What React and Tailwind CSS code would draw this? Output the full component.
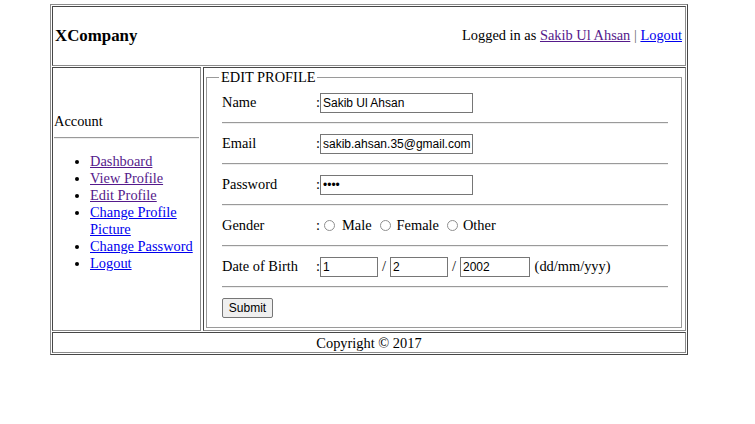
const cell =
  "border border-t-[#474747] border-l-[#474747] border-b-[#8c8c8c] border-r-[#8c8c8c]";

const inputCls =
  "h-[20px] border border-[#767676] bg-white pl-[2px] pr-[1px] font-['Liberation_Sans',Arial,sans-serif] text-[12px] text-black outline-none";

function Radio({ className = "" }) {
  return (
    <span
      className={
        "inline-block h-[11px] w-[11px] shrink-0 rounded-full border border-[#8f8f8f] bg-white " +
        className
      }
    />
  );
}

function Hr() {
  return (
    <div className="flex h-[20px] items-center">
      <div className="h-[2px] w-full border-t border-b border-t-[#9a9a9a] border-b-[#eeeeee]" />
    </div>
  );
}

function Row({ label, children }) {
  return (
    <div className="flex h-[21px] items-center">
      <div className="w-[94px] shrink-0">{label}</div>
      <span>:</span>
      {children}
    </div>
  );
}

export default function App() {
  return (
    <div className="min-h-[424px] w-[755px] bg-white pt-[4px] font-['Liberation_Serif','Times_New_Roman',serif] text-[14.4px] leading-[17px] text-black">
      <div className="ml-[50px] grid w-[638px] grid-cols-[149px_483px] gap-x-[2px] gap-y-[1px] border border-t-[#8c8c8c] border-l-[#8c8c8c] border-b-[#474747] border-r-[#474747] p-[1px]">
        {/* Header */}
        <div
          className={`${cell} col-span-2 flex h-[60px] items-center justify-between pl-[2px] pr-[3px]`}
        >
          <div className="text-[16.85px] font-bold leading-[20px]">XCompany</div>
          <div className="pb-[1px]">
            Logged in as{" "}
            <a href="#" className="text-[#551a8b] underline">
              Sakib Ul Ahsan
            </a>{" "}
            <span className="text-[#6a6a6a]">|</span>{" "}
            <a href="#" className="text-[#0000ee] underline">
              Logout
            </a>
          </div>
        </div>

        {/* Sidebar */}
        <div className={`${cell} h-[264px] px-[1px] pt-[45px]`}>
          <div>Account</div>
          <div className="mt-[7px] h-[2px] w-full border-t border-b border-t-[#9a9a9a] border-b-[#eeeeee]" />
          <ul className="mt-[14px] list-disc pl-[36px]">
            <li>
              <a href="#" className="text-[#551a8b] underline">Dashboard</a>
            </li>
            <li>
              <a href="#" className="text-[#551a8b] underline">View Profile</a>
            </li>
            <li>
              <a href="#" className="text-[#551a8b] underline">Edit Profile</a>
            </li>
            <li>
              <a href="#" className="text-[#0000ee] underline">Change Profile Picture</a>
            </li>
            <li>
              <a href="#" className="text-[#0000ee] underline">Change Password</a>
            </li>
            <li>
              <a href="#" className="text-[#0000ee] underline">Logout</a>
            </li>
          </ul>
        </div>

        {/* Content */}
        <div className={`${cell} h-[264px] pl-[2px] pr-[3px] pt-[1px]`}>
          <fieldset className="border border-[#9a9a9a] px-[12px] pt-[6px] pb-[9px]">
            <legend className="px-[2px] leading-[17px]">EDIT PROFILE</legend>
            <div className="pl-[3px] pr-[1px]">
              <Row label="Name">
                <input
                  type="text"
                  readOnly
                  defaultValue="Sakib Ul Ahsan"
                  className={`${inputCls} w-[153px]`}
                />
              </Row>
              <Hr />
              <Row label="Email">
                <input
                  type="text"
                  readOnly
                  defaultValue="sakib.ahsan.35@gmail.com"
                  className={`${inputCls} w-[153px]`}
                />
              </Row>
              <Hr />
              <Row label="Password">
                <input
                  type="password"
                  readOnly
                  defaultValue="1234"
                  className={`${inputCls} w-[153px]`}
                />
              </Row>
              <Hr />
              <Row label="Gender">
                <Radio className="ml-[4px]" />
                <span className="ml-[7px]">Male</span>
                <Radio className="ml-[8px]" />
                <span className="ml-[6px]">Female</span>
                <Radio className="ml-[8px]" />
                <span className="ml-[5px]">Other</span>
              </Row>
              <Hr />
              <Row label="Date of Birth">
                <input
                  type="text"
                  readOnly
                  defaultValue="1"
                  className={`${inputCls} w-[58px]`}
                />
                <span className="mx-[4px]">/</span>
                <input
                  type="text"
                  readOnly
                  defaultValue="2"
                  className={`${inputCls} w-[58px]`}
                />
                <span className="mx-[4px]">/</span>
                <input
                  type="text"
                  readOnly
                  defaultValue="2002"
                  className={`${inputCls} w-[70px]`}
                />
                <span className="ml-[4.6px]">(dd/mm/yyy)</span>
              </Row>
              <Hr />
              <div className="flex h-[21px] items-center">
                <button
                  type="button"
                  className="h-[20px] w-[51px] rounded-[2px] border border-[#767676] bg-[#efefef] font-['Liberation_Sans',Arial,sans-serif] text-[12px] leading-[14px] text-black"
                >
                  Submit
                </button>
              </div>
            </div>
          </fieldset>
        </div>

        {/* Footer */}
        <div className={`${cell} col-span-2 flex h-[21px] items-center justify-center pt-[1px]`}>
          Copyright © 2017
        </div>
      </div>
    </div>
  );
}
